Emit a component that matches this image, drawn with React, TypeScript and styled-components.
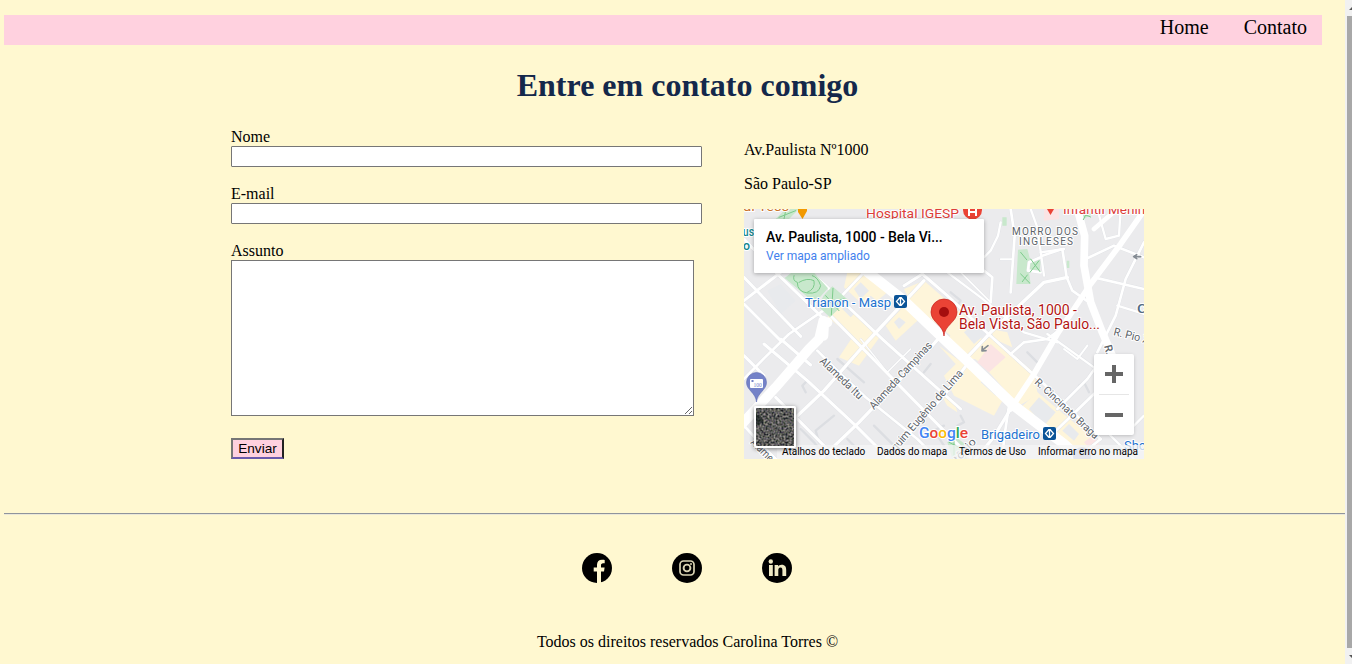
import React from "react";
import styled, { createGlobalStyle } from "styled-components";

const GlobalStyle = createGlobalStyle`
  body {
    margin: 0;
    background: #fff8d0;
    color: #000;
    font-family: "Liberation Serif", "Times New Roman", serif;
    font-size: 16px;
    line-height: 18px;
    overflow: hidden;
  }
  * { box-sizing: border-box; }
`;

const Window = styled.div`
  display: flex;
  height: 664px;
`;

const Page = styled.div`
  flex: 1;
  min-width: 0;
  padding: 15px 0 0 4px;
  display: flex;
  flex-direction: column;
`;

const Nav = styled.nav`
  display: flex;
  justify-content: flex-end;
  gap: 35px;
  width: 1318px;
  height: 30px;
  padding: 1px 15px 0 0;
  background: #ffd1df;
`;

const NavLink = styled.a`
  font-size: 20px;
  line-height: 23px;
  color: #000;
`;

const Title = styled.h1`
  width: 1367px;
  margin: 22px 0 0;
  font-size: 32px;
  line-height: 36px;
  text-align: center;
  color: #14284b;
  white-space: nowrap;
`;

const Columns = styled.main`
  display: flex;
  gap: 42px;
  height: 410px;
  padding: 25px 0 0 227px;
`;

const Form = styled.form`
  width: 471px;
  display: flex;
  flex-direction: column;
  align-items: flex-start;
`;

const Label = styled.label`
  display: block;
  height: 18px;
`;

const Input = styled.input`
  width: 471px;
  height: 21px;
  margin-bottom: 18px;
  border: 1px solid #767676;
  border-radius: 1px;
  background: #fff;
`;

const Message = styled.textarea`
  width: 463px;
  height: 156px;
  margin-bottom: 22px;
  border: 1px solid #767676;
  background: #fff;
`;

const Submit = styled.button`
  width: 53px;
  height: 21px;
  padding: 0;
  border: 2px solid;
  border-color: #767676 #212121 #6a5aac #767676;
  background: #ffd1df;
  font: 13.6px/17px "Liberation Sans", Arial, sans-serif;
  color: #000;
`;

const Address = styled.section`
  width: 400px;
  padding-top: 13px;
`;

const AddressLine = styled.p`
  margin: 0 0 16px;
  font-size: 16px;
`;

const MapFrame = styled.div`
  position: relative;
  width: 400px;
  height: 250px;
  overflow: hidden;
  font-family: Roboto, sans-serif;
`;

const MapDrawing = styled.svg`
  display: block;
  width: 400px;
  height: 250px;
`;

const PlaceCard = styled.div`
  position: absolute;
  left: 10px;
  top: 10px;
  width: 230px;
  height: 54px;
  padding: 9px 12px;
  border-radius: 1px;
  background: #fff;
  box-shadow: 0 1px 4px rgba(0, 0, 0, 0.3);
`;

const PlaceName = styled.div`
  font-size: 14px;
  font-weight: 500;
  line-height: 18px;
  letter-spacing: -0.06px;
  white-space: nowrap;
`;

const PlaceLink = styled.div`
  margin-top: 1px;
  font-size: 12px;
  line-height: 18px;
  color: #427fed;
`;

const ZoomControl = styled.div`
  position: absolute;
  left: 350px;
  top: 145px;
  width: 40px;
  height: 81px;
  border-radius: 2px;
  background: #fff;
  box-shadow: 0 1px 4px -1px rgba(0, 0, 0, 0.3);
`;

const Satellite = styled.div`
  position: absolute;
  left: 10px;
  top: 197px;
  width: 42px;
  height: 42px;
  border: 2px solid #fff;
  border-radius: 2px;
  box-shadow: 0 1px 4px rgba(0, 0, 0, 0.5);
`;

const Terms = styled.div`
  position: absolute;
  right: 0;
  bottom: 0;
  display: flex;
  gap: 12px;
  width: 367px;
  height: 14px;
  padding: 0 6px 0 5px;
  background: rgba(245, 245, 245, 0.75);
  font-size: 10px;
  line-height: 14px;
  white-space: nowrap;
`;

const Term = styled.span<{ $width: number }>`
  width: ${(p) => p.$width}px;
  flex: none;
`;

const Rule = styled.div`
  height: 2px;
  border-top: 1px solid #8f949c;
  border-bottom: 1px solid #ebe8d8;
`;

const Footer = styled.footer`
  display: flex;
  flex-direction: column;
  align-items: center;
  width: 1367px;
  padding-top: 38px;
`;

const Socials = styled.div`
  display: flex;
  gap: 60px;
  width: 210px;
  height: 30px;
  margin: 0 1px 50px 0;
`;

const SocialIcon = styled.svg`
  display: block;
  width: 30px;
  height: 30px;
`;

const Scrollbar = styled.div`
  width: 7px;
  height: 664px;
  padding: 16px 0 0 2px;
  background: #f1f1f1;
  display: flex;
  flex-direction: column;
  position: relative;
`;

const Thumb = styled.div`
  height: 632px;
  background: #a8a8a8;
`;

const ScrollArrows = styled.svg`
  position: absolute;
  inset: 0;
`;

const streets: [string, number][] = [
  ["M0 205 170 382", 9],
  ["M0 275 110 190 150 160", 9],
  ["M0 90 90 185 240 330", 9],
  ["M250 310 590 655 680 745", 9],
  ["M190 180 240 225 420 395 560 520 650 600", 9],
  ["M-5 515 60 448 135 375 230 310 270 285 360 190", 8],
  ["M110 390 200 468", 9],
  ["M0 285 110 395", 9],
  ["M60 405 190 515 335 650 440 755", 9],
  ["M0 440 60 500", 9],
  ["M140 640 240 545 350 420 540 215", 10],
  ["M95 565 155 625 285 755", 9],
  ["M0 650 65 720 100 755", 9],
  ["M230 750 345 640 560 415 600 370", 10],
  ["M220 425 290 495 365 565 520 690 600 770", 8],
  ["M480 230 535 195 610 260 700 345 800 435 900 525 1070 690", 9],
  ["M610 190 710 265 840 370 940 400", 7],
  ["M650 190 740 280", 5],
  ["M740 280 745 205 720 185", 8],
  ["M660 455 740 370 900 220 970 205", 10],
  ["M670 465 600 560 420 755", 9],
  ["M800 600 745 690 690 755", 10],
  ["M795 590 780 690 775 755", 8],
  ["M800 435 840 400 910 390 950 360", 8],
  ["M800 0 812 80 800 250", 8],
  ["M770 151 805 151", 6],
  ["M770 40 762 80 740 125 720 145", 7],
  ["M860 0 880 55 900 200", 7],
  ["M895 140 955 120 968 205 985 245 1035 280", 8],
  ["M890 130 960 120", 7],
  ["M890 145 855 160 852 185 890 190", 8],
  ["M1025 150 1110 110 1200 145", 8],
  ["M1050 205 1200 240", 8],
  ["M1200 100 1145 210 1115 320 1060 430", 8],
  ["M1120 290 1200 315", 7],
  ["M1060 0 1085 90 1125 80 1130 0", 7],
  ["M910 375 1050 475 1160 570", 7],
  ["M940 600 1030 510 1080 440", 8],
  ["M1060 640 1180 760", 7],
  ["M910 690 1050 555 1110 500", 9],
  ["M1070 690 990 755", 8],
  ["M1170 650 1200 620", 7],
  ["M960 420 1000 450 1030 410", 6],
  ["M500 420 430 490 350 390", 4],
];

const cafes = [
  "M310 190 360 190 430 250 370 300 300 235Z",
  "M290 270 410 380 345 470 285 445 325 385 250 325Z",
  "M480 240 540 215 690 345 620 380 500 280Z",
  "M425 350 480 290 520 335 455 395Z",
  "M625 370 655 340 820 480 885 555 825 590 700 450 650 450 600 410Z",
  "M680 440 740 380 800 430 870 490 880 550 830 550Z",
  "M585 410 680 480 775 575 750 620 630 560 600 500 635 465Z",
  "M590 555 630 575 640 610 610 590Z",
  "M825 600 880 550 1050 690 1000 750Z",
  "M740 360 790 370 805 415 750 390Z",
];

const buildings = [
  "M70 245 110 225 155 275 110 315Z",
  "M330 240 350 220 375 245 350 270Z",
  "M365 275 380 260 405 280 388 300Z",
  "M305 285 335 310 320 325 295 300Z",
  "M450 340 465 325 485 340 465 360Z",
  "M660 370 695 340 730 370 690 405Z",
  "M710 520 725 505 770 540 755 560Z",
  "M855 600 885 565 935 610 900 650Z",
  "M955 665 975 645 1005 675 990 695Z",
];

const culs = [
  "M280 450 360 520",
  "M185 550 175 530 190 515",
  "M270 620 215 665 225 700",
  "M540 490 560 465",
  "M600 710 570 665 600 650",
  "M640 650 660 640 650 620",
  "M850 430 880 460",
  "M1005 530 1020 520 1035 550",
  "M640 290 650 275 620 250",
  "M310 690 350 730",
  "M390 650 480 740",
  "M170 660 210 700 250 750",
];

type LabelProps = {
  x: number;
  y: number;
  text: string;
  width: number;
  size?: number;
  color?: string;
  angle?: number;
  weight?: number;
  tracked?: boolean;
};

function MapLabel({ x, y, text, width, size = 12, color = "#5b6268", angle = 0, weight = 400, tracked }: LabelProps) {
  return (
    <text
      x={x}
      y={y}
      transform={`rotate(${angle} ${x} ${y})`}
      fontSize={size}
      fontWeight={weight}
      fill={color}
      stroke="#fff"
      strokeWidth={2}
      strokeLinejoin="round"
      paintOrder="stroke"
      textLength={width}
      lengthAdjust={tracked ? "spacing" : "spacingAndGlyphs"}
    >
      {text}
    </text>
  );
}

function MetroSign({ x, y }: { x: number; y: number }) {
  return (
    <g transform={`translate(${x} ${y})`}>
      <rect width="13" height="13" rx="2" fill="#0b5498" />
      <path d="M6 2.5 2.5 6.5 6 10.5M7 2.5l3.500 4L7 10.500M6.500 2v9" fill="none" stroke="#fff" strokeWidth="1.300" />
    </g>
  );
}

function StreetMap() {
  return (
    <MapDrawing viewBox="0 0 400 250">
      <rect width="400" height="250" fill="#ebebed" />
      <g transform="scale(.33333)" fill="none" strokeLinejoin="round" strokeLinecap="round">
        {cafes.map((d) => <path key={d} d={d} fill="#fef5da" />)}
        {buildings.map((d) => <path key={d} d={d} fill="#e8eaed" />)}
        <path d="M700 460 740 405 785 445 735 490ZM900 0h45v30l-45 5ZM1020 700l25-20 20 25-20 25Z" fill="#fbe4e4" />
        <path d="M95 30 125 0 165 0 135 30ZM822 122 850 120 858 150 890 155 887 190 855 190 860 225 817 225ZM1003 10 1050 12 1005 38ZM968 155h8v22h-8ZM775 25h13v25h-13ZM610 700l30-12 40 30-20 10 10 22h-45Z" fill="#c8e8cc" />
        {culs.map((d) => <path key={d} d={d} stroke="#dcdee2" strokeWidth="7" />)}
        {streets.map(([d, w]) => <path key={d} d={d} stroke="#dfe1e5" strokeWidth={w + 2} />)}
        {streets.map(([d, w]) => <path key={d} d={d} stroke="#fff" strokeWidth={w} />)}
        <path d="M122 207 150 185 205 185 252 238 212 282ZM240 258 265 232 312 272 258 325 222 292Z" fill="#c8e8cc" />
        <path d="M-20 660 95 535 195 420 225 390 238 335" stroke="#fff" strokeWidth="29" />
        <path d="M238 380 240 345 250 340" stroke="#fff" strokeWidth="30" />
        <path d="M340 165 480 275 590 380 680 465 810 590 960 705 1010 750" stroke="#fff" strokeWidth="31" />
        <path d="M1200 5 1130 105 1040 225 940 375 870 495 800 600" stroke="#fff" strokeWidth="17" />
        <path d="M1050 60 1120 0" stroke="#fff" strokeWidth="14" />
        <path d="M1000 0 1022 80 1020 170 1040 280 1075 370 1105 440" stroke="#fff" strokeWidth="23" />
        <g stroke="#7ccb8b" strokeWidth="3">
          <path d="M150 200q-5 15 10 20 0 28 30 32 35 4 40-22-8-25-25-30M165 220q25-15 45-5 5 25-20 35M235 285l65-15M245 260l40 45M262 318l5-80M105 25l50-20M125 5l-5 25M860 150l28 38M885 155l-27 35M830 130l18 22M830 195l27 27M850 198l-15 20M1010 12l30 12M1018 32l12-25M615 700l50 25M630 690v50" />
        </g>
        <path d="M732 410 714 424m1-11-1 13 12-1M1190 143h-20m8-6-9 6 9 6" stroke="#858c94" strokeWidth="5" />
      </g>

      <MapLabel x={-9} y={2} text="ital Tess" width={54} size={13} color="#c9722b" />
      <path d="M54-3h9v5l-4.500 8L54 3Z" fill="#f29900" />
      <MapLabel x={122} y={9} text="Hospital IGESP" width={93} size={13} color="#dc3e3a" />
      <circle cx="228.500" cy="1" r="9.500" fill="#ea4335" />
      <path d="M225-2v9M232-2v9M225 3h7" stroke="#fff" strokeWidth="2" />
      <path d="m303 0 3.500 6L310 0Z" fill="#ea4335" />
      <MapLabel x={319} y={4.500} text="Infantil Menino" width={90} size={13} color="#dc3e3a" />
      <MapLabel x={-8} y={27} text="Aus" width={18} size={12} color="#12858d" weight={500} />
      <MapLabel x={-1} y={41} text="o" width={7} size={12} color="#12858d" weight={500} />
      <MapLabel x={268} y={25.500} text="MORRO DOS" width={66} size={10} tracked />
      <MapLabel x={275} y={35.500} text="INGLESES" width={54} size={10} tracked />

      <MapLabel x={61} y={97.500} text="Trianon - Masp" width={86} size={13} color="#2272cf" />
      <MetroSign x={150} y={86} />
      <MapLabel x={237} y={229.500} text="Brigadeiro" width={59} size={13} color="#2272cf" />
      <MetroSign x={299} y={218} />
      <MapLabel x={380} y={241} text="Shopping" width={54} size={13} color="#2272cf" />
      <MapLabel x={393} y={104} text="C" width={10} size={13} color="#526b83" weight={500} />

      <MapLabel x={75} y={153} text="Alameda Itu" width={55} size={11} angle={43.500} />
      <MapLabel x={130} y={201} text="Alameda Campinas" width={87} size={11} angle={-47.500} />
      <MapLabel x={148} y={247} text="aquim Eugênio de Lima" width={109} size={11} angle={-49} />
      <MapLabel x={290} y={174} text="R. Cincinato Braga" width={83} size={10.500} angle={43} />
      <MapLabel x={369} y={126} text="R. Pio XII" width={42} size={11} angle={14} />
      <MapLabel x={360} y={137} text="R." width={10} size={11} angle={75} weight={500} />
      <MapLabel x={6} y={234} text="Alameda" width={38} size={11} angle={45} />
      <MapLabel x={214} y={254} text="tônio" width={28} size={11} angle={-48} />

      <path d="M12.500 193C12 184 2.500 181 2.500 173.500a10 10 0 0 1 20 0C22.500 181 13 184 12.500 193Z" fill="#7482c8" stroke="#606db4" strokeWidth=".6" />
      <rect x="6" y="170" width="13" height="9" rx="1" fill="#fff" />
      <text x="9.500" y="178" fontSize="5.500" fill="#7482c8" fontFamily="Liberation Serif">100</text>
      <rect x="7.500" y="171" width="2" height="2" fill="#7482c8" />

      <path d="M200 127c-.5-11-13-14-13-24a13 13 0 0 1 26 0c0 10-12.500 13-13 24Z" fill="#ea4335" stroke="#c5221f" strokeWidth=".7" />
      <circle cx="200" cy="103" r="5" fill="#a50e0e" />
      <MapLabel x={215} y={106} text="Av. Paulista, 1000 -" width={118} size={14} color="#b31412" />
      <MapLabel x={215} y={120} text="Bela Vista, São Paulo..." width={141} size={14} color="#b31412" />

      <text x="175" y="229" fontSize="15.500" fontWeight="500" textLength="49" stroke="#fff" strokeWidth="2" paintOrder="stroke">
        <tspan fill="#4285f4">G</tspan>
        <tspan fill="#ea4335">o</tspan>
        <tspan fill="#fbbc04">o</tspan>
        <tspan fill="#4285f4">g</tspan>
        <tspan fill="#34a853">l</tspan>
        <tspan fill="#ea4335">e</tspan>
      </text>
      <circle cx="338" cy="247" r="9" fill="#aeb4d8" />
    </MapDrawing>
  );
}

function SatelliteView() {
  return (
    <svg width="38" height="38" display="block">
      <filter id="grain" x="0" y="0" width="100%" height="100%" colorInterpolationFilters="sRGB">
        <feTurbulence type="fractalNoise" baseFrequency=".5" numOctaves="3" seed="4" />
        <feColorMatrix values=".9 .25 0 0 -.22  .8 .35 0 0 -.22  .75 .2 .15 0 -.2  0 0 0 0 1" />
      </filter>
      <rect width="38" height="38" filter="url(#grain)" />
      <path d="M0 6 5 8 7 13 3 17 0 16Z" fill="#0d1716" opacity=".6" />
    </svg>
  );
}

export default function App() {
  return (
    <>
      <GlobalStyle />
      <Window>
        <Page>
          <Nav>
            <NavLink>Home</NavLink>
            <NavLink>Contato</NavLink>
          </Nav>
          <Title>Entre em contato comigo</Title>
          <Columns>
            <Form>
              <Label htmlFor="nome">Nome</Label>
              <Input id="nome" />
              <Label htmlFor="email">E-mail</Label>
              <Input id="email" />
              <Label htmlFor="assunto">Assunto</Label>
              <Message id="assunto" />
              <Submit type="button">Enviar</Submit>
            </Form>
            <Address>
              <AddressLine>Av.Paulista Nº1000</AddressLine>
              <AddressLine>São Paulo-SP</AddressLine>
              <MapFrame>
                <StreetMap />
                <PlaceCard>
                  <PlaceName>Av. Paulista, 1000 - Bela Vi...</PlaceName>
                  <PlaceLink>Ver mapa ampliado</PlaceLink>
                </PlaceCard>
                <Terms>
                  <Term $width={83}>Atalhos do teclado</Term>
                  <Term $width={70}>Dados do mapa</Term>
                  <Term $width={67}>Termos de Uso</Term>
                  <Term $width={100}>Informar erro no mapa</Term>
                </Terms>
                <Satellite>
                  <SatelliteView />
                </Satellite>
                <ZoomControl>
                  <svg width="40" height="81" display="block">
                    <path d="M11 20h18M20 11v18M11 61h18" stroke="#666" strokeWidth="4" />
                    <path d="M5 40.500h30" stroke="#e6e6e6" />
                  </svg>
                </ZoomControl>
              </MapFrame>
            </Address>
          </Columns>
          <Rule />
          <Footer>
            <Socials>
              <SocialIcon viewBox="0 0 30 30">
                <circle cx="15" cy="15" r="15" />
                <path d="M15 30V18.500h-3.300v-4H15v-2.700C15 8.500 16.900 6.700 20 6.700c1.200 0 2.700.2 2.700.2v3.400h-1.600c-1.600 0-2.100 1-2.100 2v2.200h3.600l-.6 4h-3V30Z" fill="#fff8d0" />
              </SocialIcon>
              <SocialIcon viewBox="0 0 30 30" fill="none" stroke="#d9d3b3">
                <circle cx="15" cy="15" r="15" fill="#000" stroke="none" />
                <rect x="8" y="8" width="14" height="14" rx="3.500" strokeWidth="1.700" />
                <circle cx="15" cy="15" r="3.400" strokeWidth="1.900" />
                <circle cx="19" cy="11" r="1" fill="#d9d3b3" stroke="none" />
              </SocialIcon>
              <SocialIcon viewBox="0 0 30 30">
                <circle cx="15" cy="15" r="15" />
                <g fill="#efe9c4">
                  <circle cx="8.800" cy="8.500" r="2.200" />
                  <path d="M7 12h3.800v11H7ZM12.600 12h3.500v1.500c.6-1 1.800-1.800 3.500-1.800 3.700 0 4.600 2.300 4.600 5.300v6h-3.800v-5.400c0-1.500-.1-3-1.900-3s-2.200 1.400-2.200 2.900V23h-3.700Z" />
                </g>
              </SocialIcon>
            </Socials>
            <span>Todos os direitos reservados Carolina Torres ©</span>
          </Footer>
        </Page>
        <Scrollbar>
          <Thumb />
          <ScrollArrows width="7" height="664">
            <path d="M4 10h3V7ZM4 655h3v3Z" fill="#555" />
          </ScrollArrows>
        </Scrollbar>
      </Window>
    </>
  );
}
